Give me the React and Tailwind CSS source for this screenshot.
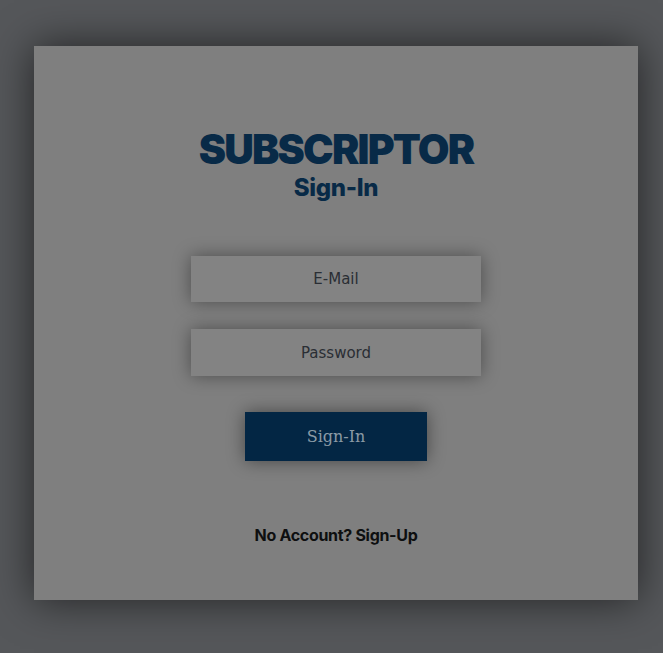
export default function App() {
  return (
    <div className="w-[663px] h-[653px] bg-[#55575a] overflow-hidden" style={{ fontFamily: 'Inter, sans-serif' }}>
      <div className="ml-[34px] mt-[46px] w-[604px] h-[554px] bg-[#7f7f7f] shadow-[0_0_40px_rgba(0,0,0,0.6)] flex flex-col items-center">
        <h1 className="mt-[78px] text-[41px] leading-[50px] font-black text-[#082a47] tracking-[-1.8px]">SUBSCRIPTOR</h1>
        <h2 className="mt-[-1px] text-[24px] leading-[30px] font-extrabold text-[#082a47] tracking-[-0.3px]">Sign-In</h2>
        <input
          placeholder="E-Mail"
          className="mt-[53px] w-[290px] h-[46px] bg-[#838383] text-center text-[15px] placeholder:text-[#2a2e34] shadow-[0_0_18px_rgba(0,0,0,0.4)] outline-none"
          style={{ fontFamily: '"DejaVu Sans", sans-serif' }}
        />
        <input
          placeholder="Password"
          className="mt-[27px] w-[290px] h-[47px] bg-[#838383] text-center text-[15px] placeholder:text-[#2a2e34] shadow-[0_0_18px_rgba(0,0,0,0.4)] outline-none"
          style={{ fontFamily: '"DejaVu Sans", sans-serif' }}
        />
        <button
          className="mt-[36px] w-[182px] h-[49px] bg-[#032644] text-[#8a9aa6] text-[16px] shadow-[0_0_18px_rgba(0,0,0,0.45)]"
          style={{ fontFamily: '"DejaVu Serif", serif' }}
        >
          Sign-In
        </button>
        <p className="mt-[62px] text-[16px] font-bold text-[#0e0f10] tracking-[-0.3px]">No Account? Sign-Up</p>
      </div>
    </div>
  );
}
